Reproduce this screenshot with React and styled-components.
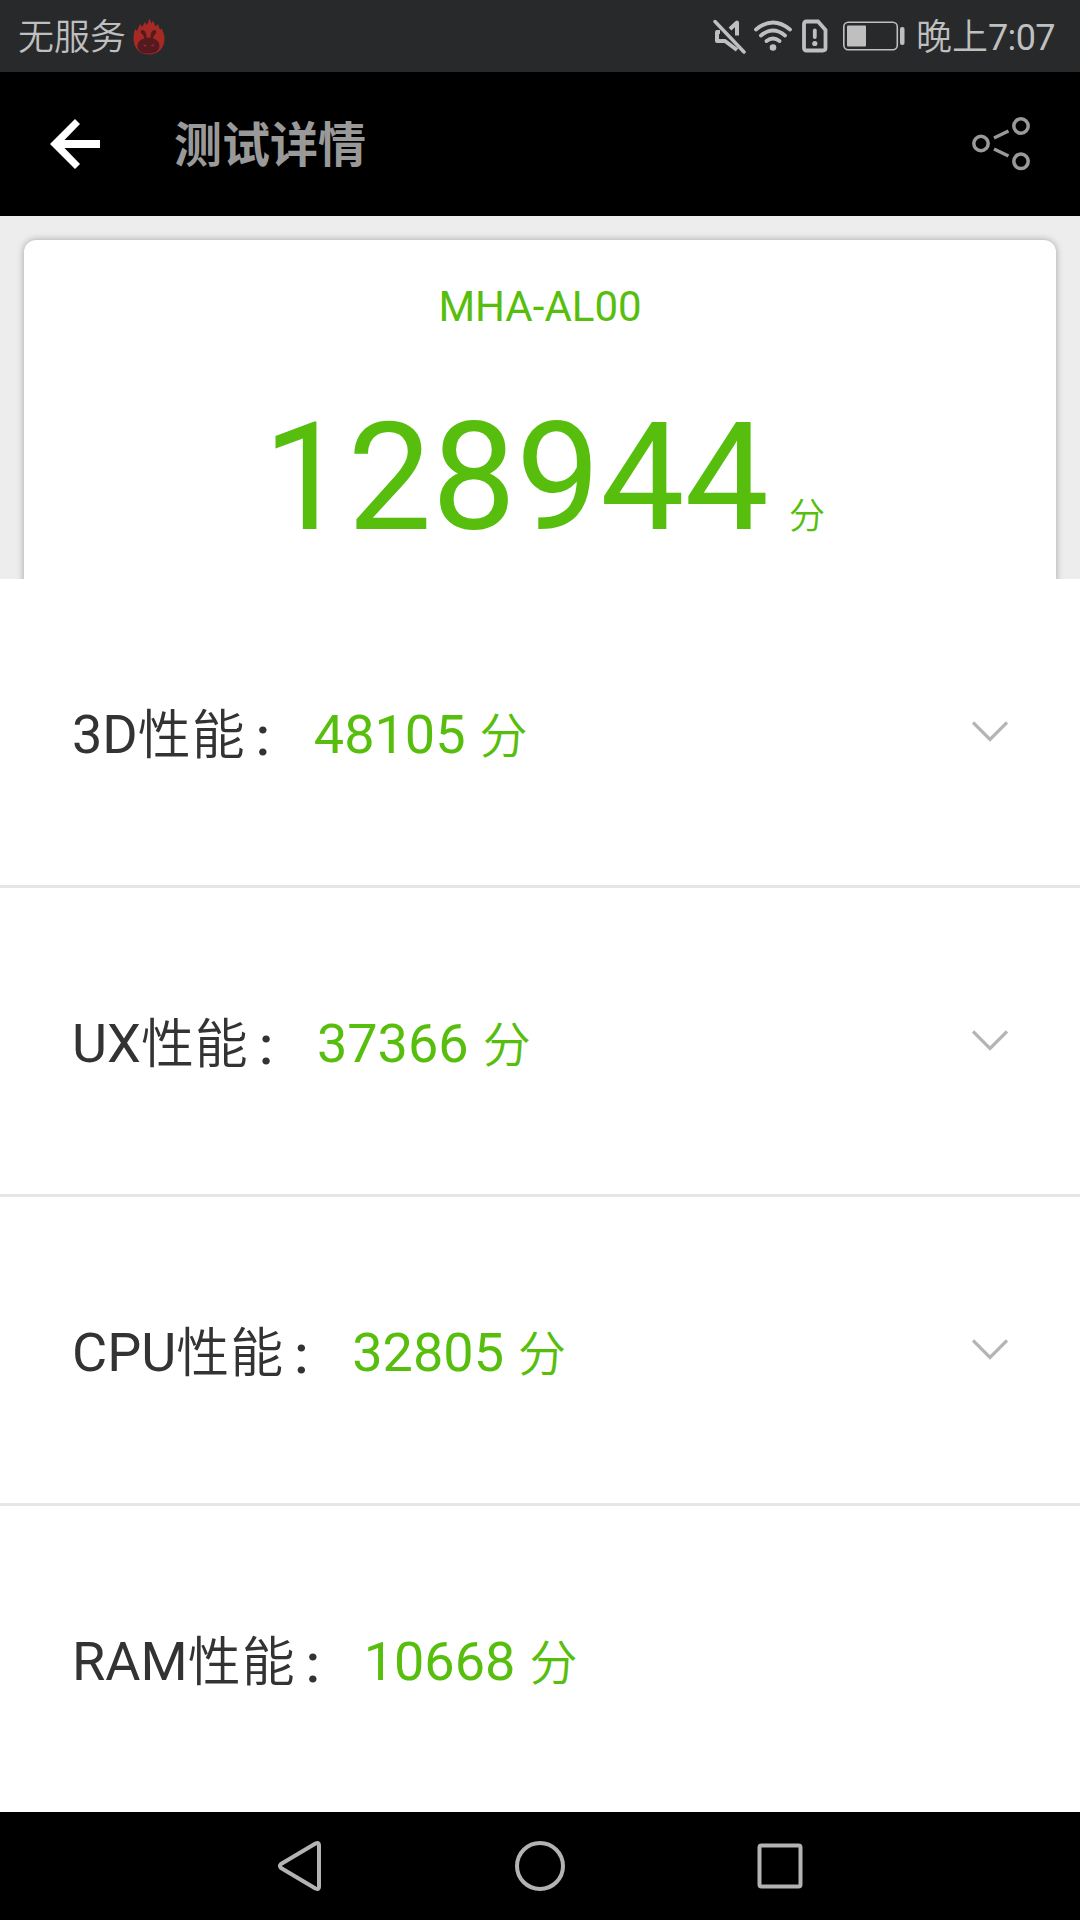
import React from 'react';
import styled, { createGlobalStyle } from 'styled-components';

const GlobalStyle = createGlobalStyle`
  body {
    margin: 0;
    background: #fff;
    font-family: Roboto, 'Noto Sans CJK SC', sans-serif;
  }
`;

const Screen = styled.div`
  width: 1080px;
  height: 1920px;
  display: flex;
  flex-direction: column;
  overflow: hidden;
  background: #fff;
`;

const StatusBar = styled.header`
  box-sizing: border-box;
  height: 72px;
  flex: none;
  display: flex;
  align-items: center;
  justify-content: space-between;
  padding: 0 25px 0 18px;
  background: #28292b;
  color: #bfbfbf;
`;

const StatusGroup = styled.div`
  display: flex;
  align-items: center;
  height: 72px;
`;

const StatusText = styled.span`
  padding-top: 4px;
  font-size: 36px;
  font-weight: 350;
  line-height: 68px;
  white-space: nowrap;
`;

const Clock = styled.span`
  padding-top: 4px;
  font-size: 36px;
  line-height: 68px;
  letter-spacing: -0.6px;
`;

const Icon = styled.svg`
  display: block;
  flex: none;
  margin-left: ${(p) => p.$gap || 0}px;
`;

const AppBar = styled.div`
  box-sizing: border-box;
  height: 144px;
  flex: none;
  display: flex;
  align-items: center;
  padding: 0 48px 0 50px;
  background: #000;
`;

const Title = styled.h1`
  flex: 1;
  margin: 0 0 0 74px;
  padding-top: 4px;
  color: #999;
  font-size: 48px;
  font-weight: 700;
  line-height: 72px;
`;

const Hero = styled.section`
  box-sizing: border-box;
  height: 363px;
  flex: none;
  padding: 24px 24px 0;
  overflow: hidden;
  background: #ededed;
`;

const ScoreCard = styled.div`
  box-sizing: border-box;
  height: 400px;
  padding-top: 37px;
  border-radius: 12px;
  background: #fff;
  box-shadow: 0 0 7px rgba(0, 0, 0, 0.32);
  color: #57be0d;
  text-align: center;
`;

const Device = styled.div`
  font-size: 42px;
  line-height: 60px;
`;

const Total = styled.div`
  display: flex;
  align-items: baseline;
  justify-content: center;
  margin-top: 53px;
  padding-left: 8px;
  font-size: 150px;
  line-height: 176px;
`;

const TotalUnit = styled.span`
  margin-left: 20px;
  font-size: 36px;
  font-weight: 350;
  line-height: 1;
`;

const List = styled.main`
  flex: 1;
  display: flex;
  flex-direction: column;
`;

const Row = styled.div`
  box-sizing: border-box;
  height: ${(p) => (p.$last ? 306 : 309)}px;
  flex: none;
  display: flex;
  align-items: center;
  justify-content: space-between;
  padding: 0 72px 0 72px;
  border-bottom: ${(p) => (p.$last ? 0 : 3)}px solid #e6e6e6;
`;

const Entry = styled.div`
  display: flex;
  align-items: baseline;
  padding-top: 7px;
  font-size: 54px;
  line-height: 64px;
  white-space: nowrap;
`;

const Label = styled.div`
  display: flex;
  align-items: baseline;
  color: #333;
`;

const Metric = styled.span`
  margin-bottom: -2px;
  font-size: 53px;
  font-weight: 350;
  letter-spacing: 1px;
  transform: translateY(1px);
`;

const Colon = styled.span`
  box-sizing: border-box;
  width: 54px;
  padding-left: 10px;
  font-weight: 500;
  transform: translateY(2px);
`;

const Value = styled.span`
  margin-left: 14px;
  color: #57be0d;
`;

const Unit = styled.span`
  margin-left: 14px;
  color: #57be0d;
  font-size: 48px;
  font-weight: 350;
`;

const NavBar = styled.nav`
  height: 108px;
  flex: none;
  display: flex;
  align-items: center;
  justify-content: center;
  gap: 180px;
  background: #000;
`;

const Flame = () => (
  <Icon $gap={7} width="32" height="37" viewBox="0 0 32 37">
    <path
      d="M16 36.500C7 36.500.500 30 .500 21c0-4 .500-7 1.500-10l2 2 3-7 2 3 3-5 2 3L16.500.500l2 5L20 2.500l2.500 6L25 6l2 6 1.500-1.500C30.500 14 31.500 17 31.500 21c0 9-6.500 15.500-15.500 15.500z"
      fill="#a52a24"
    />
    <path
      d="M4.500 28c0-4 3-6.800 6.800-7.600-.300-2-1-3.400-2.300-4.400-1.800-1.500-1.500-4 .500-4 3 0 4 4 4.300 7.700h3.700c.200-4 1-7.700 4-7.700 2 0 2.300 2.500.800 4-1.300 1.200-2 2.600-2.200 4.600 4 1 6.400 3.600 6.400 7.400 0 5-5 7.500-11 7.500S4.500 33 4.500 28z"
      fill="#541a20"
    />
    <path d="M10 26l4 1.500-2.500 1zM21.500 26l-4 1.500 2.500 1z" fill="#a52a24" />
  </Icon>
);

const Mute = () => (
  <Icon width="34" height="36" viewBox="0 0 34 36" fill="none" stroke="#bfbfbf" strokeWidth="4">
    <path d="M17 11l7-6.500v13M7 14H4v9h8l12 9" strokeLinejoin="round" />
    <path d="M2 3.500l29 30.500" strokeWidth="3.500" strokeLinecap="round" />
  </Icon>
);

const Wifi = () => (
  <Icon $gap={6} width="40" height="34" viewBox="0 0 40 34" fill="none" stroke="#bfbfbf" strokeWidth="3.800" strokeLinecap="round">
    <path d="M3 10.500Q20-3.500 37 10.500M8 16.500q12-10 24 0M13.500 22q6.500-5 13 0" />
    <circle cx="20" cy="28.500" r="3.300" fill="#bfbfbf" stroke="none" />
  </Icon>
);

const SimAlert = () => (
  <Icon $gap={9} width="26" height="34" viewBox="0 0 26 34" fill="none" stroke="#bfbfbf" strokeWidth="3.800">
    <path d="M4.500 2.500H16l7.500 8.500v18q0 2.500-2.500 2.500H4.500Q2 31.500 2 29V5q0-2.500 2.500-2.500z" />
    <path d="M12.800 11.500v6.500" strokeLinecap="round" />
    <circle cx="12.800" cy="24.500" r="2.600" fill="#bfbfbf" stroke="none" />
  </Icon>
);

const Battery = () => (
  <Icon $gap={15} width="62" height="30" viewBox="0 0 62 30">
    <rect x="0.800" y="1.300" width="53.500" height="27.500" rx="4.500" fill="none" stroke="#bfbfbf" strokeWidth="1.600" />
    <rect x="4" y="4.500" width="19" height="21" rx="1" fill="#bfbfbf" />
    <rect x="57" y="6" width="4.500" height="18" rx="2" fill="#bfbfbf" />
  </Icon>
);

const StatusSpacer = styled.span`
  width: 11px;
`;

const BackArrow = () => (
  <Icon width="50" height="50" viewBox="0 0 50 50">
    <path d="M0 25L25 0l5 5-15.500 16H50v8H14.500L30 45l-5 5z" fill="#fff" />
  </Icon>
);

const Share = () => (
  <Icon width="60" height="54" viewBox="0 0 60 54" fill="none" stroke="#999" strokeWidth="3.500">
    <circle cx="9" cy="26.500" r="7.200" />
    <circle cx="49" cy="9" r="7.200" />
    <circle cx="49" cy="44.300" r="7.200" />
    <path d="M22 21l14.500-7M22 32l14.500 7" />
  </Icon>
);

const Chevron = () => (
  <Icon width="36" height="22" viewBox="0 0 36 22">
    <path d="M1 1.500l17 17L35 1.500" fill="none" stroke="#b5b5b5" strokeWidth="3.200" />
  </Icon>
);

const NavIcon = ({ children }) => (
  <Icon width="60" height="60" viewBox="0 0 60 60" fill="none" stroke="#b3b3b3" strokeWidth="4" strokeLinejoin="round">
    {children}
  </Icon>
);

const results = [
  { name: '3D', score: 48105, expandable: true },
  { name: 'UX', score: 37366, expandable: true },
  { name: 'CPU', score: 32805, expandable: true },
  { name: 'RAM', score: 10668, expandable: false },
];

export default function App() {
  return (
    <Screen>
      <GlobalStyle />
      <StatusBar>
        <StatusGroup>
          <StatusText>无服务</StatusText>
          <Flame />
        </StatusGroup>
        <StatusGroup>
          <Mute />
          <Wifi />
          <SimAlert />
          <Battery />
          <StatusSpacer />
          <StatusText>晚上</StatusText>
          <Clock>7:07</Clock>
        </StatusGroup>
      </StatusBar>
      <AppBar>
        <BackArrow />
        <Title>测试详情</Title>
        <Share />
      </AppBar>
      <Hero>
        <ScoreCard>
          <Device>MHA-AL00</Device>
          <Total>
            128944<TotalUnit>分</TotalUnit>
          </Total>
        </ScoreCard>
      </Hero>
      <List>
        {results.map((r, i) => (
          <Row key={r.name} $last={i === results.length - 1}>
            <Entry>
              <Label>
                {r.name}
                <Metric>性能</Metric>
                <Colon>:</Colon>
              </Label>
              <Value>{r.score}</Value>
              <Unit>分</Unit>
            </Entry>
            {r.expandable && <Chevron />}
          </Row>
        ))}
      </List>
      <NavBar>
        <NavIcon>
          <path d="M11 28L45.500 7.500q3.500-1.500 3.500 1.500v42q0 3-3.500 1.500L11 32q-2-2 0-4z" />
        </NavIcon>
        <NavIcon>
          <circle cx="30" cy="30" r="23" />
        </NavIcon>
        <NavIcon>
          <rect x="9.500" y="9.500" width="41" height="41" rx="2" />
        </NavIcon>
      </NavBar>
    </Screen>
  );
}
